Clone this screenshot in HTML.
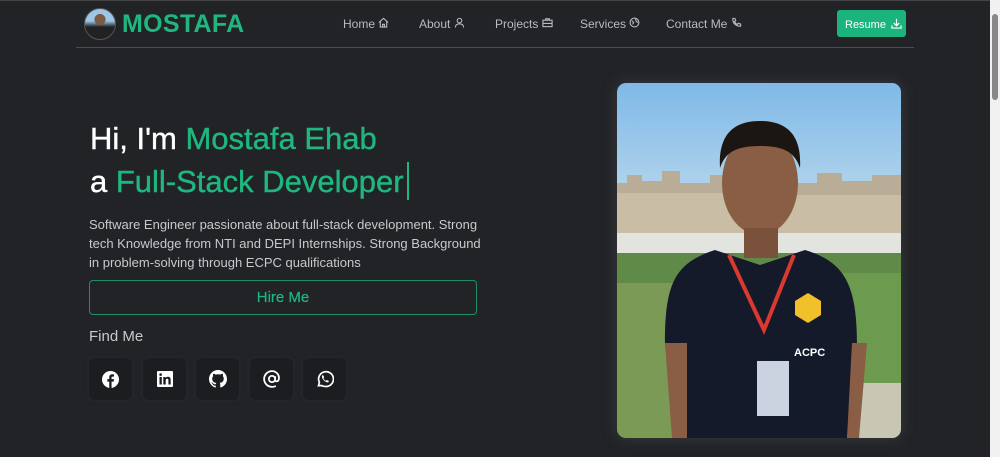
<!DOCTYPE html>
<html><head><meta charset="utf-8"><style>
*{box-sizing:border-box;margin:0;padding:0}
html,body{width:1000px;height:457px;overflow:hidden;background:#212327;font-family:"Liberation Sans",sans-serif;color:#e6e6e6}
.top{position:absolute;left:0;top:0;width:1000px;height:1px;background:#444}
.sb{position:absolute;right:0;top:0;width:10px;height:457px;background:#f1f1f1}
.sb i{position:absolute;left:2px;top:14px;width:6px;height:86px;background:#888;border-radius:3px}
.hdr-line{position:absolute;left:76px;top:47px;width:838px;height:1px;background:#4a4c50}
.logo{position:absolute;left:84px;top:8px;width:32px;height:32px;border-radius:50%;background:radial-gradient(circle at 50% 35%,#7a5a44 0 22%,transparent 23%),linear-gradient(#9cc6e6 0 40%,#222 60%);border:1px solid #555}
.brand{position:absolute;left:122px;top:10px;font-size:25px;font-weight:bold;color:#1fb67f;letter-spacing:0.3px}
.nav{position:absolute;top:17px;font-size:12px;color:#b9bbbe;white-space:nowrap}
.btn{position:absolute;left:837px;top:10px;width:69px;height:27px;background:#1cb47d;border-radius:3px;color:#fff;font-size:11px;padding:8px 0 0 8px;white-space:nowrap}
h1{position:absolute;left:90px;top:117px;font-size:31px;font-weight:normal;line-height:43px;color:#fff;-webkit-text-stroke:0.4px currentColor;white-space:nowrap}
h1 span{color:#1fb67f}
.cur{display:inline-block;width:2px;height:38px;background:#1fb67f;vertical-align:-8px;margin-left:3px;-webkit-text-stroke:0}
p.d{position:absolute;left:89px;top:215px;width:400px;font-size:13px;line-height:19px;color:#c8c9cb}
.hire{position:absolute;left:89px;top:280px;width:388px;height:35px;border:1px solid #1e8f66;border-radius:4px;color:#1fb67f;font-size:15px;text-align:center;line-height:33px;-webkit-text-stroke:0.2px currentColor}
.fm{position:absolute;left:89px;top:328px;font-size:15px;color:#c8c9cb}
.ic{position:absolute;top:358px;width:43px;height:42px;background:#1b1d21;border-radius:6px;box-shadow:0 0 4px #2b2d31;display:flex;align-items:center;justify-content:center}
.photo{position:absolute;left:617px;top:83px;width:284px;height:355px;border-radius:9px;overflow:hidden;box-shadow:0 0 14px #3a3c40}
</style></head><body>
<div class="top"></div>
<div class="logo"></div>
<div class="brand">MOSTAFA</div>
<div class="nav" style="left:343px">Home <svg width="11" height="11" viewBox="0 0 12 12" fill="none" stroke="#b9bbbe" stroke-width="1.2"><path d="M1 6L6 1.5 11 6M2.5 5v6h7V5M5 11V8h2v3"/></svg></div>
<div class="nav" style="left:419px">About <svg width="11" height="11" viewBox="0 0 12 12" fill="none" stroke="#b9bbbe" stroke-width="1.2"><circle cx="6" cy="4" r="2.5"/><path d="M1.5 11.5c0-3 2-4 4.5-4s4.5 1 4.5 4"/></svg></div>
<div class="nav" style="left:495px">Projects <svg width="11" height="11" viewBox="0 0 12 12" fill="none" stroke="#b9bbbe" stroke-width="1.2"><rect x="1" y="3.5" width="10" height="7"/><path d="M4 3.5V2h4v1.5M1 7h10"/></svg></div>
<div class="nav" style="left:580px">Services <svg width="11" height="11" viewBox="0 0 12 12" fill="none" stroke="#b9bbbe" stroke-width="1.2"><circle cx="6" cy="6" r="4.8"/><path d="M3 4l2 2-1 2M7 2l1 3 2 1"/></svg></div>
<div class="nav" style="left:666px">Contact Me <svg width="11" height="11" viewBox="0 0 12 12" fill="none" stroke="#b9bbbe" stroke-width="1.2"><path d="M2 1.5l2.2 0 1 2.5-1.4 1c.7 1.5 1.7 2.5 3.2 3.2l1-1.4 2.5 1v2.2c-5 .5-9-3.5-8.5-8.5z"/></svg></div>
<div class="btn">Resume <svg width="11" height="11" viewBox="0 0 12 12" fill="none" stroke="#fff" stroke-width="1.3" style="margin-left:2px;vertical-align:-1px"><path d="M6 1v7M3 5.5L6 8.5 9 5.5M1 8v3h10V8"/></svg></div>
<div class="hdr-line"></div>

<h1>Hi, I'm <span>Mostafa Ehab</span><br>a <span>Full-Stack Developer</span><span class="cur"></span></h1>
<p class="d">Software Engineer passionate about full-stack development. Strong tech Knowledge from NTI and DEPI Internships. Strong Background in problem-solving through ECPC qualifications</p>
<div class="hire">Hire Me</div>
<div class="fm">Find Me</div>
<div class="ic" style="left:89px"><svg width="17" height="17" viewBox="0 0 16 16"><circle cx="8" cy="8" r="8" fill="#fff"/><path d="M9 16V10h2l.3-2.3H9V6.4c0-.7.2-1.1 1.1-1.1h1.2V3.2C11 3.1 10.4 3 9.7 3 8 3 6.8 4 6.8 5.9v1.8H5V10h1.8v6z" fill="#1b1d21"/></svg></div>
<div class="ic" style="left:143px"><svg width="16" height="16" viewBox="0 0 16 16"><rect width="16" height="16" rx="1" fill="#fff"/><path d="M2.5 6h2.3v7.5H2.5zM3.6 2.3a1.3 1.3 0 110 2.6 1.3 1.3 0 010-2.6zM6.3 6h2.2v1c.4-.7 1.2-1.2 2.4-1.2 2.4 0 2.8 1.5 2.8 3.5v4.2h-2.3V9.8c0-.9 0-2-1.2-2s-1.5.9-1.5 1.9v3.8H6.3z" fill="#1b1d21"/></svg></div>
<div class="ic" style="left:196px"><svg width="18" height="18" viewBox="0 0 16 16"><path fill="#fff" d="M8 0C3.6 0 0 3.6 0 8c0 3.5 2.3 6.5 5.5 7.6.4.1.5-.2.5-.4v-1.4c-2.2.5-2.700-1-2.7-1-.4-.9-.9-1.2-.9-1.2-.7-.5.1-.5.1-.5.8.1 1.2.8 1.2.8.7 1.2 1.9.9 2.3.7.1-.5.3-.9.5-1.1-1.8-.2-3.6-.9-3.6-4 0-.9.3-1.6.8-2.1-.1-.2-.4-1 .1-2.1 0 0 .7-.2 2.2.8.6-.2 1.3-.3 2-.3s1.4.1 2 .3c1.5-1 2.2-.8 2.2-.8.4 1.1.2 1.9.1 2.1.5.6.8 1.3.8 2.1 0 3.1-1.9 3.7-3.6 3.9.3.3.5.8.5 1.5v2.2c0 .2.1.5.6.4C13.7 14.5 16 11.5 16 8c0-4.4-3.6-8-8-8z"/></svg></div>
<div class="ic" style="left:250px"><svg width="18" height="18" viewBox="0 0 16 16" fill="none" stroke="#fff" stroke-width="1.6"><circle cx="8" cy="8" r="2.8"/><path d="M10.8 5.5v3.5c0 1.3 2.7 1.7 3.2-.5C15 4 11.5 1 8 1a7 7 0 100 14c1.4 0 2.5-.3 3.4-.8"/></svg></div>
<div class="ic" style="left:303px"><svg width="18" height="18" viewBox="0 0 16 16" fill="none" stroke="#fff" stroke-width="1.5"><path d="M2.2 14l.8-3A6.6 6.6 0 118 14.6c-1.1 0-2.2-.3-3.1-.8z"/><path d="M5.5 4.8c.4-.3.8-.3 1 0l.7 1.5c.1.3-.4.8-.6 1 .6 1.2 1.3 1.9 2.3 2.3.3-.3.6-.8 1-.6l1.4.7c.2.3 0 .9-.4 1.2-1.4.9-5.6-2.5-5.600-4.8 0-.6.1-1 .2-1.3z" fill="#fff" stroke="none"/></svg></div>

<div class="photo"><svg width="284" height="355" viewBox="0 0 284 355">
<defs><linearGradient id="sky" x1="0" y1="0" x2="0" y2="1"><stop offset="0" stop-color="#7fb9e8"/><stop offset="1" stop-color="#b6d6ec"/></linearGradient></defs>
<rect width="284" height="120" fill="url(#sky)"/>
<rect y="100" width="284" height="55" fill="#c9bda5"/>
<path d="M0 100h10v-8h15v6h20v-10h18v12h30v-8h20V110H0zM180 100h20v-10h25v8h30v-6h29v20H180z" fill="#b9ad98"/>
<rect y="150" width="284" height="25" fill="#e2e4e0"/>
<rect y="170" width="284" height="185" fill="#5f8a48"/>
<rect x="0" y="200" width="60" height="155" fill="#7a9a55"/>
<rect x="220" y="190" width="64" height="165" fill="#6c9a4f"/>
<rect x="200" y="300" width="84" height="55" fill="#c9c7b4"/>
<ellipse cx="143" cy="100" rx="38" ry="52" fill="#8a5e45"/>
<path d="M103 85c-2-35 15-47 40-47s42 12 40 47c-5-15-15-22-40-22s-35 7-40 22z" fill="#1c1612"/>
<rect x="127" y="145" width="34" height="30" fill="#7a523c"/>
<path d="M58 355L48 260c0-60 10-80 50-93l45 15 45-15c40 12 52 35 52 95l-10 93z" fill="#151a2b"/>
<path d="M48 260h22v95H55zM235 260h15l-8 95h-12z" fill="#8a5e45"/>
<path d="M112 172l35 75 30-75" fill="none" stroke="#d9392f" stroke-width="4"/>
<rect x="140" y="278" width="32" height="55" fill="#cbd2e0"/>
<path d="M178 218l13-8 13 8v14l-13 8-13-8z" fill="#f2c02a"/>
<text x="177" y="273" font-size="11" font-weight="bold" fill="#fff" font-family="Liberation Sans">ACPC</text>
</svg></div>
<div class="sb"><i></i></div>
</body></html>
